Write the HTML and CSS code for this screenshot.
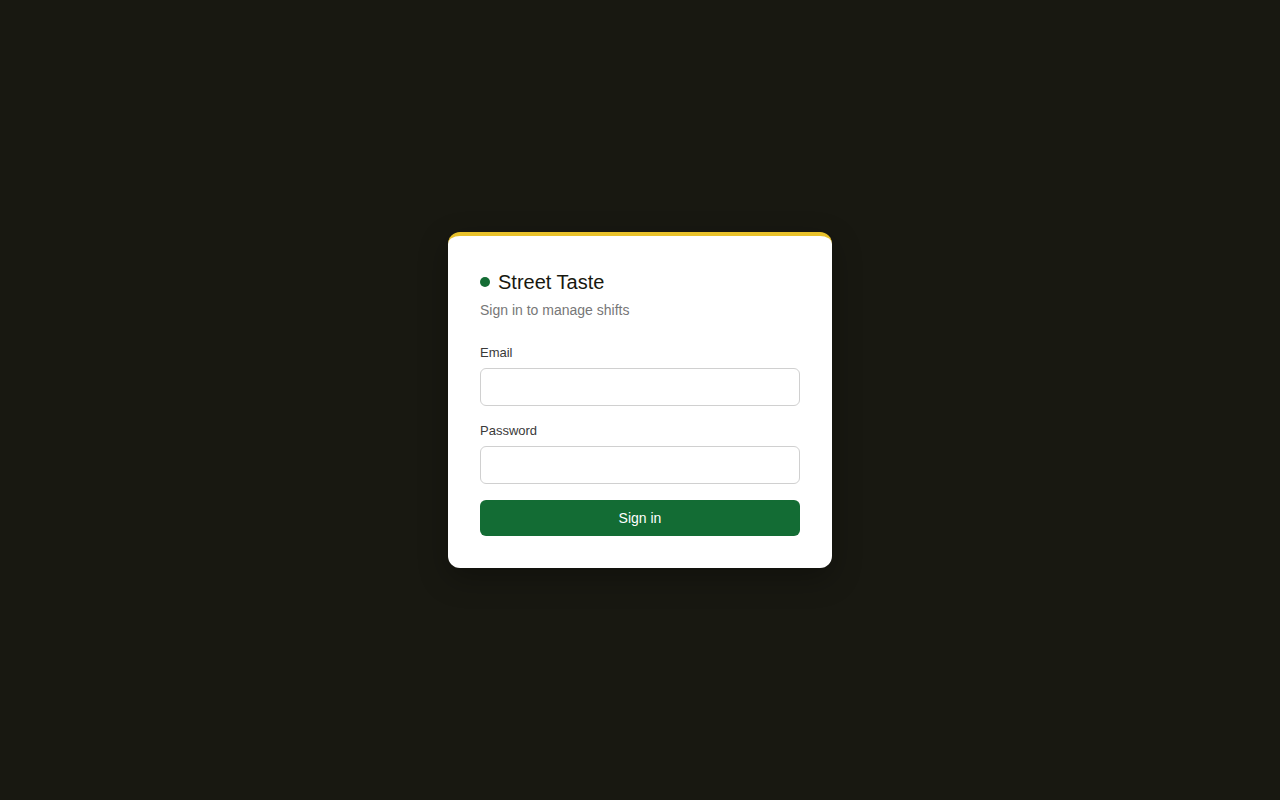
FILE: index.html
```html
<!DOCTYPE html>
<html lang="en">
<head>
<meta charset="utf-8">
<title>Street Taste — Sign in</title>
<link rel="stylesheet" href="styles.css">
</head>
<body>
<main class="page">
  <form class="card">
    <div class="brand">
      <span class="dot"></span>
      <h1 class="title">Street Taste</h1>
    </div>
    <p class="subtitle">Sign in to manage shifts</p>
    <div class="fields">
      <label class="field">
        <span class="label">Email</span>
        <input class="input" type="email">
      </label>
      <label class="field">
        <span class="label">Password</span>
        <input class="input" type="password">
      </label>
      <button class="btn" type="button">Sign in</button>
    </div>
  </form>
</main>
</body>
</html>
```

FILE: styles.css
```css
* { box-sizing: border-box; }
html, body { margin: 0; height: 100%; }
body {
  background: #181811;
  font-family: "Liberation Sans", Arial, sans-serif;
}
.page {
  height: 100%;
  display: flex;
  align-items: center;
  justify-content: center;
}
.card {
  width: 384px;
  background: #fff;
  border-top: 4px solid #e9c22b;
  border-radius: 12px;
  padding: 32px;
  box-shadow: 0 10px 30px rgba(0,0,0,0.3);
}
.brand {
  display: flex;
  align-items: center;
  gap: 8px;
  height: 28px;
}
.dot {
  width: 10px;
  height: 10px;
  border-radius: 50%;
  background: #146c34;
}
.title {
  margin: 0;
  font-size: 20px;
  font-weight: 400;
  color: #18180f;
  line-height: 28px;
}
.subtitle {
  margin: 4px 0 0;
  font-size: 14px;
  line-height: 20px;
  color: #777;
}
.fields {
  margin-top: 24px;
  display: flex;
  flex-direction: column;
  gap: 16px;
}
.field {
  display: flex;
  flex-direction: column;
  gap: 6px;
}
.label {
  font-size: 13px;
  line-height: 18px;
  color: #3a3a3a;
}
.input {
  height: 38px;
  border: 1px solid #d0d0d0;
  border-radius: 6px;
  background: #fff;
  font: inherit;
  padding: 0 10px;
}
.btn {
  height: 36px;
  border: none;
  border-radius: 6px;
  background: #136c34;
  color: #fff;
  font-family: inherit;
  font-size: 14px;
}
```
